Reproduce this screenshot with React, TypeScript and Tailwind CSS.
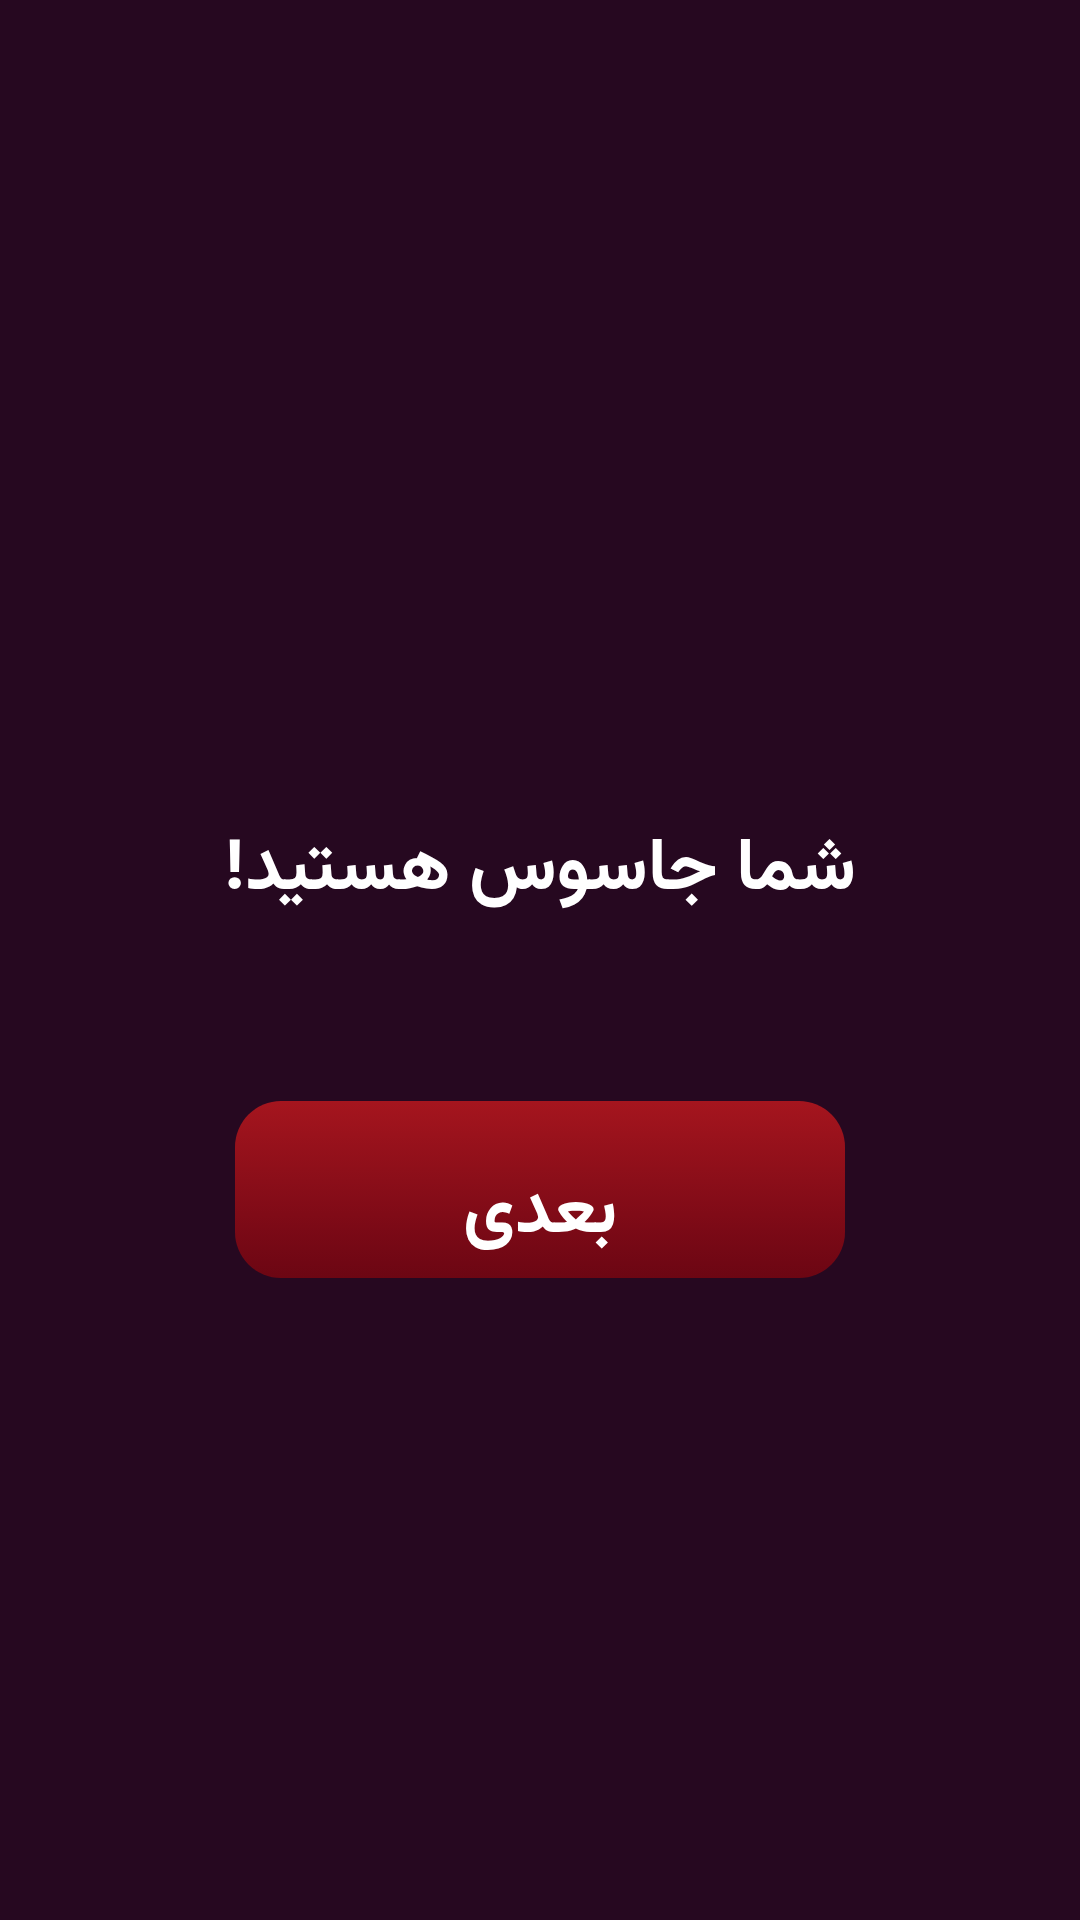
export default function App() {
  return (
    <div
      dir="rtl"
      className="w-[1080px] h-[1920px] bg-[#260820] flex flex-col items-center pt-[815px]"
      style={{ fontFamily: 'Vazirmatn, "Noto Sans Arabic", sans-serif' }}
    >
      <h1 className="text-white font-bold text-[73px] leading-[112px]">شما جاسوس هستید!</h1>
      <button className="mt-[174px] w-[610px] h-[177px] rounded-[46px] bg-gradient-to-b from-[#a5151e] to-[#6c0613] text-white font-bold text-[72px] leading-none pt-[50px] flex items-center justify-center">
        بعدی
      </button>
    </div>
  );
}
